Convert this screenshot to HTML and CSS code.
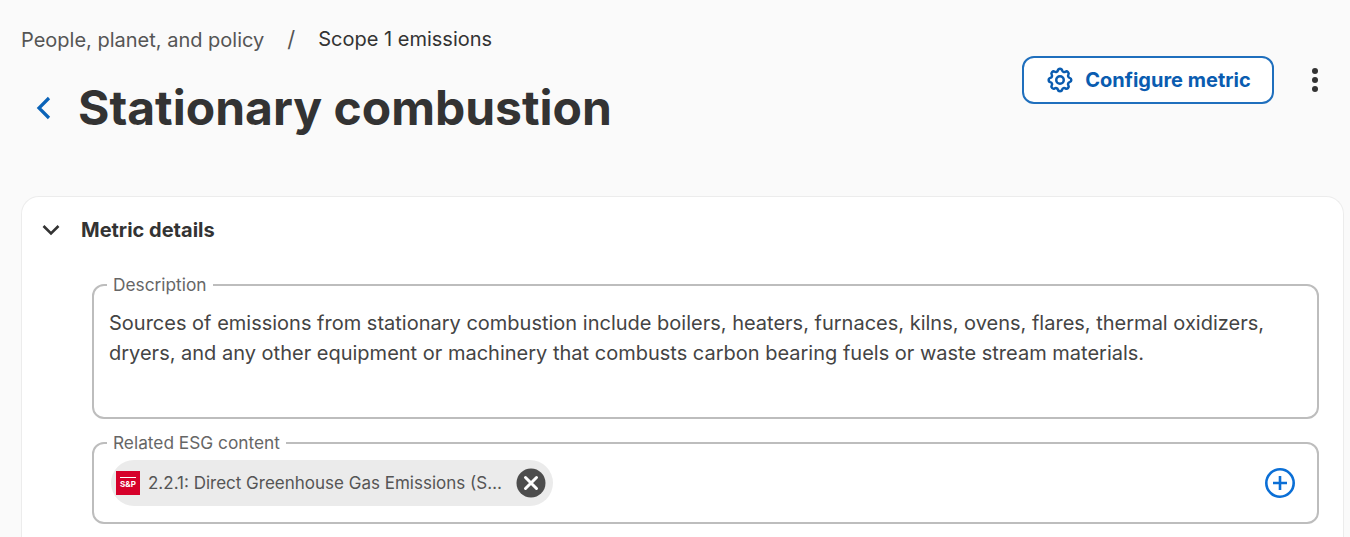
FILE: index.html
```html
<!DOCTYPE html>
<html lang="en">
<head>
  <meta charset="UTF-8" />
  <title>Stationary combustion</title>
  <link rel="stylesheet" href="styles.css">
</head>
<body>
  <div class="page">
    <header class="top">
      <div class="top-left">
        <nav class="crumbs">
          <span class="crumb">People, planet, and policy</span>
          <span class="crumb-sep">/</span>
          <span class="crumb-current">Scope 1 emissions</span>
        </nav>
        <div class="title-row">
          <svg class="back" width="18" height="26" viewBox="0 0 18 26"><path d="M14 3 L4 13 L14 23" fill="none" stroke="#0a63b8" stroke-width="3.2"/></svg>
          <h1>Stationary combustion</h1>
        </div>
      </div>
      <div class="actions">
        <button type="button" class="configure">
          <svg width="30" height="30" viewBox="0 0 24 24" fill="none" stroke="#0a5cb0" stroke-width="2" stroke-linecap="round" stroke-linejoin="round"><path d="M10.3 4.3c.4-1.8 3-1.8 3.4 0a1.7 1.7 0 0 0 2.6 1.1c1.5-.9 3.3.8 2.4 2.4a1.7 1.7 0 0 0 1 2.5c1.8.4 1.8 3 0 3.4a1.7 1.7 0 0 0-1 2.6c.9 1.5-.9 3.3-2.4 2.4a1.7 1.7 0 0 0-2.6 1c-.4 1.8-3 1.8-3.4 0a1.7 1.7 0 0 0-2.5-1c-1.6.9-3.3-.9-2.4-2.4a1.7 1.7 0 0 0-1.1-2.6c-1.8-.4-1.8-3 0-3.4a1.7 1.7 0 0 0 1.1-2.5c-.9-1.6.8-3.3 2.4-2.4a1.7 1.7 0 0 0 2.5-1.1z"/><circle cx="12" cy="12" r="3"/></svg>
          Configure metric
        </button>
        <div class="more"><i></i><i></i><i></i></div>
      </div>
    </header>

    <section class="card">
      <div class="card-head">
        <svg width="18" height="12" viewBox="0 0 18 12"><path d="M1.5 2 L9 9.5 L16.5 2" fill="none" stroke="#333" stroke-width="2.6"/></svg>
        <h2>Metric details</h2>
      </div>
      <div class="card-body">
        <fieldset class="field field-desc">
          <legend>Description</legend>
          <p>Sources of emissions from stationary combustion include boilers, heaters, furnaces, kilns, ovens, flares, thermal oxidizers, dryers, and any other equipment or machinery that combusts carbon bearing fuels or waste stream materials.</p>
        </fieldset>
        <fieldset class="field field-esg">
          <legend>Related ESG content</legend>
          <div class="esg-row">
            <div class="chip">
              <span class="sp-logo">S&amp;P</span>
              <span class="chip-text">2.2.1: Direct Greenhouse Gas Emissions (S…</span>
              <svg width="30" height="30" viewBox="0 0 30 30"><circle cx="15" cy="15" r="14.5" fill="#4d4d4d"/><path d="M9.5 9.5 L20.5 20.5 M20.5 9.5 L9.5 20.5" stroke="#fff" stroke-width="3" stroke-linecap="round"/></svg>
            </div>
            <svg class="add" width="32" height="32" viewBox="0 0 32 32"><circle cx="16" cy="16" r="13.7" fill="none" stroke="#0b6fd6" stroke-width="2.6"/><path d="M16 9 V23 M9 16 H23" stroke="#0b6fd6" stroke-width="2.6"/></svg>
          </div>
        </fieldset>
      </div>
    </section>
  </div>
</body>
</html>
```

FILE: styles.css
```css
html, body {
  margin: 0;
  height: 537px;
  overflow: hidden;
}

body {
  font-family: "Inter", "Liberation Sans", sans-serif;
  background: #fafafa;
  color: #333;
}

.page {
  padding: 25px 6px 0 21px;
}

.top {
  display: flex;
  justify-content: space-between;
  height: 171px;
}

.crumbs {
  display: flex;
  align-items: center;
  font-size: 20px;
  line-height: 26px;
  color: #555;
}

.crumb {
  margin-top: 2px;
}

.crumb-sep {
  margin: 0 23px;
  font-size: 22px;
}

.crumb-current {
  color: #333;
}

.title-row {
  display: flex;
  align-items: center;
  gap: 25px;
  margin-top: 25px;
  padding-left: 14px;
}

.title-row h1 {
  margin: 0;
  font-size: 48px;
  line-height: 60px;
  font-weight: 700;
  color: #333;
}

.actions {
  display: flex;
  align-items: center;
  align-self: flex-start;
  margin-top: 31px;
  gap: 38px;
  padding-right: 26px;
}

.configure {
  display: flex;
  align-items: center;
  justify-content: center;
  gap: 10px;
  width: 252px;
  height: 48px;
  background: #fff;
  border: 2px solid #1f6fbd;
  border-radius: 12px;
  color: #0a5cb0;
  font-family: inherit;
  font-size: 20px;
  font-weight: 700;
}

.more {
  display: flex;
  flex-direction: column;
  gap: 3px;
}

.more i {
  display: block;
  width: 6px;
  height: 6px;
  border-radius: 50%;
  background: #333;
}

.card {
  background: #fff;
  border: 1px solid #ececec;
  border-bottom: 0;
  border-radius: 18px 18px 0 0;
  height: 340px;
}

.card-head {
  display: flex;
  align-items: center;
  gap: 21px;
  padding: 20px 0 0 20px;
  height: 26px;
}

.card-head h2 {
  margin: 0;
  font-size: 20px;
  font-weight: 700;
  color: #333;
}

.card-body {
  padding: 32px 24px 0 70px;
}

.field {
  box-sizing: border-box;
  margin: 0 0 14px;
  padding: 0 16px 0 15px;
  border: 2px solid #bdbdbd;
  border-radius: 12px;
}

.field legend {
  padding: 0 6px;
  margin-left: -2px;
  font-size: 17.3px;
  line-height: 20px;
  color: #666;
}

.field-desc {
  height: 144px;
}

.field-desc p {
  margin: 13px 0 0;
  font-size: 20px;
  line-height: 30px;
  color: #444;
}

.field-esg {
  height: 91px;
  padding: 0 21px 0 16px;
}

.field-esg legend {
  margin-left: -3px;
}

.esg-row {
  display: flex;
  align-items: center;
  justify-content: space-between;
  margin-top: 7px;
}

.chip {
  display: flex;
  align-items: center;
  gap: 8px;
  height: 46px;
  padding: 0 7px 0 5px;
  margin-left: 1px;
  border-radius: 23px;
  background: #ebebeb;
}

.sp-logo {
  display: block;
  box-sizing: border-box;
  width: 24px;
  height: 24px;
  padding-top: 6px;
  background: #d6002a;
  color: #fff;
  font-size: 8px;
  font-weight: 700;
  line-height: 11px;
  text-align: center;
}

.sp-logo::before {
  content: "";
  display: block;
  height: 1px;
  margin: 0 4px 1px;
  background: #fff;
}

.chip-text {
  font-size: 17px;
  color: #555;
  width: 360px;
  white-space: nowrap;
}
```
